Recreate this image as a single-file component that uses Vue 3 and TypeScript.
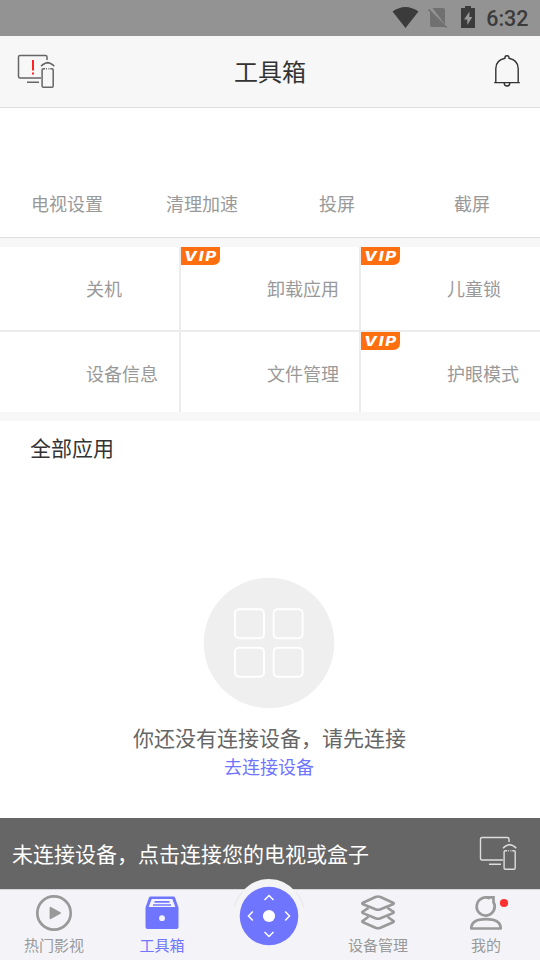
<script setup lang="ts">
interface Tool {
  name: string
  vip: boolean
}

const shortcuts: string[] = ['电视设置', '清理加速', '投屏', '截屏']
const tools: Tool[] = [
  { name: '关机', vip: false },
  { name: '卸载应用', vip: true },
  { name: '儿童锁', vip: true },
  { name: '设备信息', vip: false },
  { name: '文件管理', vip: false },
  { name: '护眼模式', vip: true },
]
</script>

<template>
  <div class="screen">
    <div class="status">
      <svg class="status-icons" width="92" height="36" viewBox="390 0 92 36">
        <path d="M392.5 11.5Q405.500 2.500 418.500 11.500L405.500 28Z" fill="#3b3b3b" />
        <path d="M432.500 8h10.500q2 0 2 2v14.500zM430 11.500L445 27h-13q-2 0-2-2z" fill="#707070" />
        <path d="M428.500 9.500L446.500 27.500" stroke="#707070" stroke-width="1.700" />
        <path d="M461 8h4V6h6v2h4v20h-14z" fill="#3b3b3b" />
        <path d="M469.500 11.500l-5.500 8h3.300v5.500l5-8h-3z" fill="#999" />
      </svg>
      <span class="clock">6:32</span>
    </div>

    <header class="header">
      <svg class="device" width="38" height="36" viewBox="0 0 38 36" fill="none" stroke="#666" stroke-width="1.500">
        <path d="M24 25H3q-1.500 0-1.500-1.500V4q0-1.500 1.500-1.500h25.500q1.500 0 1.500 1.500v3M10 29.300h12" />
        <path d="M28 15.800h-1.700q-1.200 0-1.200 1.200v16q0 1.200 1.200 1.200h8.700q1.200 0 1.200-1.200V17q0-1.200-1.200-1.200h-1.700M28.900 15.800h1M31.400 15.800h1M24 13.200q6.600-7 13.300 0M26.700 11.300q4-3.300 8 0" />
        <path d="M16 7v10.500M16 19.500v2" stroke="#ff2323" stroke-width="2" />
      </svg>
      <h1>工具箱</h1>
      <svg class="bell" width="30" height="36" viewBox="0 0 30 36" fill="none" stroke="#333" stroke-width="1.400">
        <path d="M2.200 29.600h25.600M3.800 29.500V15.500C3.800 10 7.500 6.500 13 5.300V4.500q0-1.700 2-1.700t2 1.700v.8C22.500 6.500 26.200 10 26.200 15.500v14M12.200 29.700q0 3.300 2.800 3.300t2.800-3.300" />
      </svg>
    </header>

    <nav class="shortcuts">
      <span v-for="s in shortcuts" :key="s">{{ s }}</span>
    </nav>

    <section class="tools">
      <div v-for="t in tools" :key="t.name" class="tool">
        <svg v-if="t.vip" class="vip" width="39" height="18" viewBox="0 0 39 18">
          <path d="M0 0h39v11q0 7-7 7H0z" fill="#ff6f10" />
          <text x="3" y="13.500" textLength="34" lengthAdjust="spacingAndGlyphs">VIP</text>
        </svg>
        <span>{{ t.name }}</span>
      </div>
    </section>

    <main class="apps">
      <h2>全部应用</h2>
      <div class="empty">
        <svg width="132" height="132" viewBox="0 0 132 132">
          <circle cx="66" cy="66" r="65.300" fill="#efefef" />
          <g fill="none" stroke="#fff" stroke-width="1.900">
            <rect x="32" y="32.200" width="29" height="29" rx="4" />
            <rect x="70.600" y="32.200" width="29" height="29" rx="4" />
            <rect x="32" y="70.800" width="29" height="29" rx="4" />
            <rect x="70.600" y="70.800" width="29" height="29" rx="4" />
          </g>
        </svg>
        <p>你还没有连接设备，请先连接</p>
        <a>去连接设备</a>
      </div>
    </main>

    <div class="banner">
      <span>未连接设备，点击连接您的电视或盒子</span>
      <svg class="device" width="38" height="36" viewBox="0 0 38 36" fill="none" stroke="#ddd" stroke-width="1.400">
        <path d="M24 25H3q-1.500 0-1.500-1.500V4q0-1.500 1.500-1.500h25.500q1.500 0 1.500 1.500v3M10 29.300h12" />
        <path d="M28 15.800h-1.700q-1.200 0-1.200 1.200v16q0 1.200 1.200 1.200h8.700q1.200 0 1.200-1.200V17q0-1.200-1.200-1.200h-1.700M28.900 15.800h1M31.400 15.800h1M24 13.200q6.600-7 13.300 0M26.700 11.300q4-3.300 8 0" />
      </svg>
    </div>

    <footer class="tabs">
      <div class="tab">
        <svg width="40" height="40" viewBox="0 0 40 40">
          <circle cx="20" cy="20" r="16.700" fill="none" stroke="#999" stroke-width="2.700" />
          <path d="M16.500 14.700l9.500 5.300-9.500 5.300z" fill="#999" stroke="#999" stroke-width="1.800" stroke-linejoin="round" />
        </svg>
        <span>热门影视</span>
      </div>
      <div class="tab active">
        <svg width="40" height="40" viewBox="0 0 40 40">
          <path d="M8.500 3.500h23q1.200 0 1.600 1.200L36.500 14.500V34q0 2-2 2h-29q-2 0-2-2V14.500L6.900 4.700q.4-1.200 1.600-1.200z" fill="#7075ff" />
          <path d="M9.700 6h20.600l3 8H6.700z" fill="#f4f4f8" />
          <path d="M12.500 8.900h15M11 12h18" stroke="#7075ff" stroke-width="1.700" />
          <circle cx="20" cy="25.200" r="2.900" fill="#f4f4f8" />
        </svg>
        <span>工具箱</span>
      </div>
      <div class="tab remote">
        <svg class="pad" width="76" height="72" viewBox="231 877 76 72">
          <path d="M232 914C236 904 236 899 242 892Q253 879 269 879T296 892C302 899 302 904 306 914V930H232Z" fill="#f4f4f6" />
          <path d="M234 907Q237 898 242 892M304 907Q301 898 296 892" fill="none" stroke="#e6e6e8" stroke-width="1" />
          <circle cx="269" cy="916" r="29.300" fill="#7075ff" />
          <circle cx="269" cy="916" r="6.100" fill="#fff" />
          <path d="M264.500 900l4.500-4.500 4.500 4.500M264.500 932l4.500 4.500 4.500-4.500M252.800 911.500l-4.300 4.500 4.300 4.500M285.200 911.500l4.300 4.500-4.300 4.500" fill="none" stroke="#fff" stroke-width="1.500" />
        </svg>
      </div>
      <div class="tab">
        <svg width="40" height="40" viewBox="0 0 40 40" fill="none" stroke="#999" stroke-width="2.600" stroke-linejoin="round">
          <path d="M17.500 4q2.500-.9 5 0L35 9.700q1.500.8 0 1.600L22.500 16.300q-2.500.9-5 0L5 11.300q-1.500-.8 0-1.600z" />
          <path d="M10.500 14.800L5 18.500q-1.500.8 0 1.600l12.500 5.200q2.500.9 5 0L35 20.100q1.500-.8 0-1.600L29.500 14.800" />
          <path d="M10.500 23.800L5 27.700q-1.500.8 0 1.600l12.500 5.500q2.500.9 5 0L35 29.300q1.500-.8 0-1.600L29.500 23.800" />
        </svg>
        <span>设备管理</span>
      </div>
      <div class="tab">
        <svg width="48" height="40" viewBox="0 0 48 40" fill="none" stroke="#999" stroke-width="2.700">
          <path d="M27.800 5.500A9 9 0 1 0 31.600 9.200M24 4.400h7.500v5.800" />
          <path d="M9.300 35.500C9.300 29 15 26.200 24 26.200s14.700 2.800 14.700 9.300z" stroke-linejoin="round" />
          <circle cx="42" cy="10" r="4.100" fill="#ff3030" stroke="none" />
        </svg>
        <span>我的</span>
      </div>
    </footer>
  </div>
</template>

<style>
body {
  margin: 0;
}
</style>

<style scoped>
.screen {
  width: 540px;
  height: 960px;
  display: flex;
  flex-direction: column;
  overflow: hidden;
  background: #fff;
  font-family: 'Noto Sans CJK SC', sans-serif;
  color: #999;
}
svg {
  display: block;
  flex: none;
}
.status {
  height: 36px;
  flex: none;
  display: flex;
  justify-content: flex-end;
  align-items: center;
  background: #939393;
  padding-right: 11.5px;
}
.status-icons {
  margin-right: 4px;
}
.clock {
  font: 500 21.5px/36px Roboto, sans-serif;
  color: #3b3b3b;
  padding-top: 2px;
}
.header {
  box-sizing: border-box;
  height: 72px;
  flex: none;
  display: grid;
  grid-template-columns: 60px 1fr 60px;
  align-items: center;
  background: #f7f7f7;
  border-bottom: 1px solid #dedede;
}
.header svg {
  margin-bottom: 1px;
}
.header .device {
  margin-left: 17px;
}
.header h1 {
  margin: 0 0 2px;
  font-size: 24px;
  font-weight: 400;
  line-height: 36px;
  text-align: center;
  color: #333;
}
.bell {
  margin-left: 12px;
}
.shortcuts {
  box-sizing: border-box;
  height: 130px;
  flex: none;
  display: grid;
  grid-template-columns: repeat(4, 1fr);
  padding-top: 82px;
  border-bottom: 1px solid #dedede;
  font-size: 18px;
  line-height: 27px;
  text-align: center;
}
.shortcuts span {
  padding-right: 1px;
}
.tools {
  flex: none;
  display: grid;
  grid-template-columns: 179px 178px 179px;
  grid-template-rows: 83px 80px;
  gap: 2px;
  background: #ececec;
  border-top: 9px solid #f7f7f7;
  border-bottom: 9px solid #f7f7f7;
}
.tool {
  position: relative;
  background: #fff;
  padding: 28px 0 0 86px;
  font-size: 18px;
  line-height: 27px;
}
.vip {
  position: absolute;
  left: 0;
  top: 0;
}
.vip text {
  font: italic 800 13px Inter, sans-serif;
  letter-spacing: 1.5px;
  fill: #fff;
}
.apps {
  flex: 1;
  min-height: 0;
}
.apps h2 {
  margin: 10px 0 0 30px;
  font-size: 21px;
  font-weight: 400;
  line-height: 32px;
  color: #333;
}
.empty {
  display: flex;
  flex-direction: column;
  align-items: center;
  padding-top: 114px;
  padding-right: 2px;
}
.empty p {
  margin: 13px 0 1px 1px;
  font-size: 21px;
  line-height: 30px;
  color: #666;
}
.empty a {
  font-size: 18px;
  line-height: 27px;
  color: #7075ff;
}
.banner {
  box-sizing: border-box;
  height: 71px;
  flex: none;
  display: flex;
  align-items: center;
  justify-content: space-between;
  background: #666;
  padding: 0 23px 1px 12px;
  color: #fff;
  font-size: 21px;
}
.banner .device {
  margin-bottom: 1px;
}
.tabs {
  box-sizing: border-box;
  height: 71px;
  flex: none;
  display: grid;
  grid-template-columns: repeat(5, 1fr);
  background: #f4f4f8;
  border-top: 1px solid #d5d5d7;
}
.tab {
  position: relative;
  display: flex;
  flex-direction: column;
  align-items: center;
  padding-top: 3px;
  font-size: 15px;
  line-height: 22px;
}
.tab span {
  margin-top: 1px;
}
.active {
  color: #7075ff;
}
.pad {
  position: absolute;
  left: 15px;
  top: -13px;
}
</style>
